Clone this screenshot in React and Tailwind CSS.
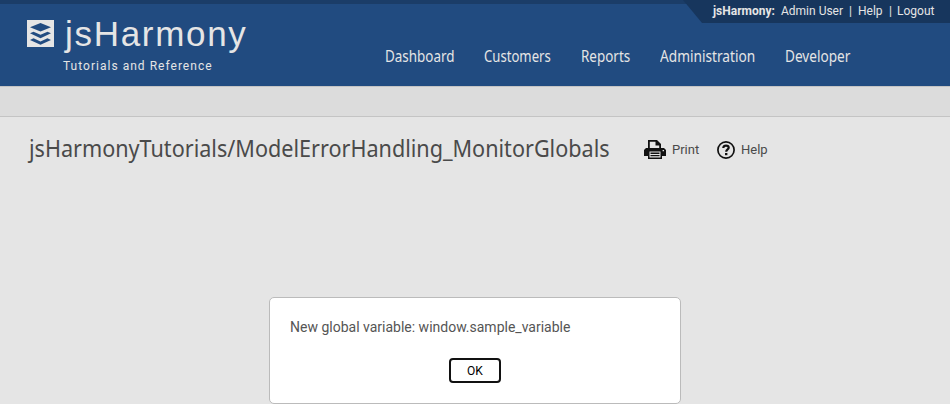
const navItems = [
  { label: 'Dashboard', box: 'w-[69px]', scale: 'scale-x-[0.84]' },
  { label: 'Customers', box: 'w-[67px]', scale: 'scale-x-[0.82]' },
  { label: 'Reports', box: 'w-[49px]', scale: 'scale-x-[0.84]' },
  { label: 'Administration', box: 'w-[95px]', scale: 'scale-x-[0.855]' },
  { label: 'Developer', box: 'w-[65px]', scale: 'scale-x-[0.85]' },
];

function LogoMark() {
  return (
    <svg className="mt-5 h-[27px] w-[27px] shrink-0" viewBox="0 0 27 27">
      <rect width="27" height="27" fill="#e5e5e5" />
      <g fill="#214b80">
        <path d="M13.5 3 24 7.2 13.5 11.6 3 7.2Z" />
        <path d="M3 13.3 6.5 11.7 13.5 14.8 20.5 11.7 24 13.3 13.5 18.2Z" />
        <path d="M3 19.9 6.5 18.3 13.5 21.4 20.5 18.3 24 19.9 13.5 24.8Z" />
      </g>
    </svg>
  );
}

function PrintIcon() {
  return (
    <svg className="-mt-px h-[19px] w-[22px]" viewBox="0 0 22 19">
      <path fill="#111" d="M4 0h9l4 4v4h3l2 2v6h-4v3H4v-3H0v-6l2-2h2z" />
      <path fill="#e5e5e5" d="M5.8 1.8H11.5V5.5h3.7V8h-9.4zM5.5 11.5h11v6h-11zM18.6 10h1.4v1.2h-1.4z" />
      <path fill="#111" d="M6.5 12.6h9v1.3h-9zM6.5 15h9v1.3h-9z" />
    </svg>
  );
}

function HelpIcon() {
  return (
    <svg className="h-[18px] w-[18px]" viewBox="0 0 18 18" fill="none" stroke="#111">
      <circle cx="9" cy="9" r="8.1" strokeWidth="1.7" />
      <path d="M6.3 7.1C6.3 5.3 7.4 4.6 9 4.6s2.7.9 2.7 2.2C11.7 8.5 9.2 8.5 9.2 10.8" strokeWidth="2.2" />
      <path d="M8 13.1h2.4" strokeWidth="2.2" />
    </svg>
  );
}

export default function App() {
  return (
    <div className="relative flex h-[404px] w-[950px] flex-col overflow-hidden bg-[#e5e5e5] font-['Roboto',sans-serif]">
      <header className="relative flex h-[86px] shrink-0 border-t-4 border-[#1b3d68] bg-[#214b80] text-[#e5e5e5]">
        <div className="-mt-1 flex pl-[27px]">
          <LogoMark />
          <div className="ml-[9px] w-[300px]">
            <div className="ml-[2px] mt-[13px] h-[42px] whitespace-nowrap font-['Liberation_Sans',Arial,sans-serif] text-[35px] leading-[42px] tracking-[1.7px]">
              jsHarmony
            </div>
            <div className="mt-[2px] whitespace-nowrap text-[12px] leading-[18px] tracking-[1.02px]">
              Tutorials and Reference
            </div>
          </div>
        </div>
        <nav className="ml-[22px] mt-10 flex gap-[30px] font-['Noto_Sans',sans-serif] text-[16px] leading-6">
          {navItems.map((item) => (
            <a key={item.label} className={`-ml-[0.5px] mr-[0.5px] block whitespace-nowrap ${item.box}`}>
              <span className={`inline-block origin-left ${item.scale}`}>{item.label}</span>
            </a>
          ))}
        </nav>
        <div className="absolute -top-1 right-0 flex h-[23px] w-[267px] bg-[#17365d] pl-[30px] text-[12px] leading-[22px] [clip-path:polygon(0_0,100%_0,100%_100%,19px_100%)]">
          <b className="w-[68px] whitespace-nowrap">jsHarmony:</b>
          <span className="w-[68px] whitespace-nowrap">Admin User</span>
          <span className="w-[9px]">|</span>
          <span className="w-[31px]">Help</span>
          <span className="w-[8px]">|</span>
          <span>Logout</span>
        </div>
      </header>
      <div className="h-[31px] shrink-0 border-y border-[#c4c4c4] bg-[#dcdcdc]" />
      <main className="flex h-[66px] shrink-0 items-center pl-[29px] text-[#4a4a4a]">
        <h1 className="-mt-[5px] w-[615px] whitespace-nowrap font-['Noto_Sans',sans-serif] text-[24px] leading-8">
          <span className="inline-block origin-left scale-x-[0.9]">jsHarmonyTutorials/ModelErrorHandling_MonitorGlobals</span>
        </h1>
        <a className="flex w-[73px] items-center gap-[6px] text-[13px]">
          <PrintIcon />
          Print
        </a>
        <a className="flex items-center gap-[6px] text-[13px]">
          <HelpIcon />
          Help
        </a>
      </main>
      <div className="absolute left-[269px] top-[297px] flex h-[107px] w-[412px] flex-col rounded-[5px] border border-[#bbb] bg-white px-5 pt-[19px]">
        <p className="whitespace-nowrap text-[14px] leading-5 text-[#555]">New global variable: window.sample_variable</p>
        <button className="mt-[21px] h-[25px] w-[52px] self-center rounded-[4px] border-2 border-[#111] text-[12px] leading-5 text-black">OK</button>
      </div>
    </div>
  );
}
